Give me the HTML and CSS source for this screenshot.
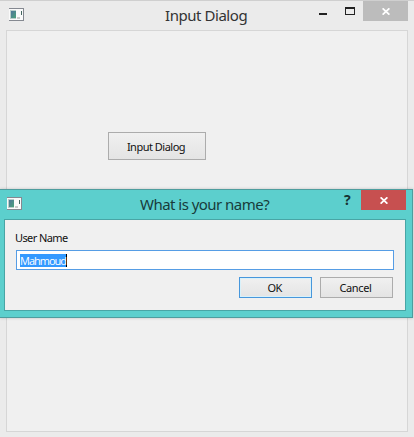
FILE: index.html
```
<!DOCTYPE html>
<html lang="en">
<head>
<meta charset="utf-8">
<title>Input Dialog</title>
<link rel="stylesheet" href="styles.css">
</head>
<body>
<svg class="defs" width="0" height="0" aria-hidden="true">
  <defs>
    <linearGradient id="pane" x1="0" y1="0" x2="1" y2="1"><stop offset="0" stop-color="#50759b"/><stop offset="1" stop-color="#49a279"/></linearGradient>
    <symbol id="app" viewBox="0 0 15 13">
      <path fill="#a8abad" d="M0 0h15v13H0z"/>
      <path fill="#858991" d="M0 0h15v1H0zM0 12h15v1H0zM14 0h1v13h-1z"/>
      <path fill="#fafafa" d="M0 1h14v11H0z"/>
      <path fill="#b9cdc9" d="M1 2h6v9H1z"/>
      <path fill="url(#pane)" d="M2 3h5v7H2z"/>
      <path fill="#446660" d="M12 3h1v4h-1z"/>
      <path fill="#cbcbcb" d="M8 9h3v2H8z"/>
    </symbol>
    <symbol id="close" viewBox="0 0 8 7">
      <path fill="none" stroke="currentColor" stroke-width="1.7" d="M.6 .3 7.4 6.7M7.4 .3 .6 6.7"/>
    </symbol>
  </defs>
</svg>
<main class="window">
  <header class="titlebar">
    <svg class="app-icon"><use href="#app"/></svg>
    <h1 class="title">Input Dialog</h1>
    <div class="controls">
      <svg class="minimize" viewBox="0 0 8 2"><path fill="#222" d="M0 0h8v2H0z"/></svg>
      <svg class="maximize" viewBox="0 0 10 8"><path fill="#222" fill-rule="evenodd" d="M0 0h10v8H0zM1 2v5h8V2z"/></svg>
      <button class="close" aria-label="Close"><svg><use href="#close"/></svg></button>
    </div>
  </header>
  <section class="client">
    <button class="button launch"><span>Input Dialog</span></button>
  </section>
</main>
<section class="dialog">
  <header class="titlebar">
    <svg class="app-icon"><use href="#app"/></svg>
    <h2 class="title">What is your name?</h2>
    <div class="controls">
      <span class="help">?</span>
      <button class="close" aria-label="Close"><svg><use href="#close"/></svg></button>
    </div>
  </header>
  <div class="form">
    <div class="label">User Name</div>
    <div class="field"><span class="selection">Mahmoud</span></div>
    <div class="actions">
      <button class="button default"><span class="ok">OK</span></button>
      <button class="button"><span class="cancel">Cancel</span></button>
    </div>
  </div>
</section>
</body>
</html>
```

FILE: styles.css
```
* { box-sizing: border-box; }
body {
  margin: 0;
  height: 437px;
  overflow: hidden;
  background: #ebebeb;
  color: #111;
  font: 11px/14px "Noto Sans", sans-serif;
}
.defs { position: absolute; }
button { padding: 0; border: 0; font: inherit; color: inherit; }
svg { display: block; }
.window {
  height: 437px;
  padding: 0 6px 5px;
  border-top: 1px solid #cfcfcf;
}
.titlebar { display: flex; height: 29px; align-items: flex-start; }
.app-icon { width: 15px; height: 13px; margin: 7px 0 0 3px; flex: none; }
.title {
  margin: 3px 0 0 141px;
  font: 400 15px/22px "Noto Sans", sans-serif;
  letter-spacing: -0.45px;
  white-space: nowrap;
  color: #333;
}
.controls { display: flex; margin-left: auto; }
.minimize { width: 8px; height: 2px; margin: 12px 18px 0 0; }
.maximize { width: 10px; height: 8px; margin: 6px 8px 0 0; }
.close {
  display: flex;
  justify-content: center;
  width: 45px;
  height: 20px;
  padding-top: 7px;
  background: #bcbcbc;
  color: #fff;
}
.close svg { width: 8px; height: 7px; }
.client {
  width: 402px;
  height: 402px;
  padding: 101px;
  border: 1px solid #d6d6d6;
  background: #f0f0f0;
}
.button {
  width: 73px;
  height: 21px;
  border: 1px solid #acacac;
  background: linear-gradient(#f0f0f0, #e4e4e4);
  line-height: 19px;
  white-space: nowrap;
}
.button span { margin-right: 2px; letter-spacing: -0.4px; }
.button .ok { letter-spacing: -0.8px; }
.button .cancel { letter-spacing: -0.35px; }
.launch { display: block; width: 98px; height: 28px; line-height: 28px; }
.launch span { letter-spacing: -0.5px; }
.dialog {
  position: absolute;
  left: 0;
  top: 189px;
  width: 413px;
  height: 129px;
  padding: 0 6px 0 4px;
  border: 1px solid #4e9d9e;
  border-left: 0;
  background: #5ccfcd;
  box-shadow: 0 0 3px #0003;
}
.dialog .app-icon { margin-left: 3px; }
.dialog .title { margin: 3px 0 0 118px; letter-spacing: -0.53px; color: #183c3b; }
.dialog .close { background: #c75050; }
.help { width: 8px; margin: -1px 9px 0 0; font: 700 14px/22px "Noto Sans", sans-serif; color: #163332; }
.form {
  width: 402px;
  height: 92px;
  padding: 11px 11px 0;
  border: 1px solid #48a5a5;
  background: #f0f0f0;
}
.label { height: 19px; margin-left: -1px; letter-spacing: -0.6px; }
.field {
  width: 378px;
  height: 20px;
  padding: 3px;
  border: 1px solid #569de5;
  background: #fff;
}
.selection {
  display: block;
  width: 47px;
  height: 13px;
  border-right: 1px solid #000;
  background: #3399ff;
  color: #fff;
  line-height: 13px;
  font-family: "Open Sans", "Noto Sans", sans-serif;
  letter-spacing: -1px;
}
.actions { display: flex; justify-content: flex-end; gap: 8px; margin: 7px 1px 0 0; }
.default { border-color: #4797dc; box-shadow: inset 0 0 0 1px #d9f1fa; }
```
